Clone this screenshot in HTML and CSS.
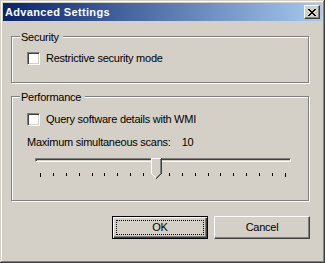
FILE: index.html
```html
<!DOCTYPE html>
<html>
<head>
<meta charset="utf-8">
<link rel="stylesheet" href="styles.css">
</head>
<body>
<div class="window">
  <div class="titlebar">
    <span class="title">Advanced Settings</span>
    <span class="close"><svg width="8" height="7" viewBox="0 0 8 7" shape-rendering="crispEdges"><path fill="#000" d="M0 0h2v1H0zM6 0h2v1H6zM1 1h2v1H1zM5 1h2v1H5zM2 2h4v1H2zM3 3h2v1H3zM2 4h4v1H2zM1 5h2v1H1zM5 5h2v1H5zM0 6h2v1H0zM6 6h2v1H6z"/></svg></span>
  </div>
  <div class="client">
    <div class="group g1">
      <div class="legend">Security</div>
      <div class="row r1"><span class="checkbox"></span><span>Restrictive security mode</span></div>
    </div>
    <div class="group g2">
      <div class="legend">Performance</div>
      <div class="row r2"><span class="checkbox"></span><span>Query software details with WMI</span></div>
      <div class="label-row">Maximum simultaneous scans:<span class="value">10</span></div>
      <div class="slider">
        <div class="track"></div>
        <div class="ticks"><i class="end"></i><i></i><i></i><i></i><i></i><i></i><i></i><i></i><i></i><i></i><i></i><i></i><i></i><i></i><i></i><i></i><i></i><i></i><i></i><i class="end"></i></div>
        <svg class="thumb" width="11" height="21" viewBox="0 0 11 21" shape-rendering="crispEdges">
          <path fill="#d4d0c8" d="M1 1h8v15H1zM2 16h6v1H2zM3 17h3v1H3zM4 18h2v1H4z"/>
          <path fill="#fff" d="M0 0h10v1H0zM0 1h1v15H0zM1 16h1v1H1zM2 17h1v1H2zM3 18h1v1H3zM4 19h1v1H4z"/>
          <path fill="#808080" d="M9 1h1v15H9zM8 16h1v1H8zM7 17h1v1H7zM6 18h1v1H6zM5 19h1v1H5z"/>
          <path fill="#404040" d="M10 0h1v16h-1zM9 16h1v1H9zM8 17h1v1H8zM7 18h1v1H7zM6 19h1v1H6zM5 20h1v1H5z"/>
        </svg>
      </div>
    </div>
    <div class="buttons">
      <button class="btn default">OK</button>
      <button class="btn">Cancel</button>
    </div>
  </div>
</div>
</body>
</html>
```

FILE: styles.css
```css
html, body {
  margin: 0;
  padding: 0;
  background: #d4d0c8;
}

.window {
  width: 325px;
  height: 263px;
  box-sizing: border-box;
  padding: 3px;
  background: #d4d0c8;
  box-shadow: inset -1px -1px 0 #404040, inset 1px 1px 0 #d4d0c8, inset -2px -2px 0 #808080, inset 2px 2px 0 #fff;
  font-family: "Liberation Sans", Arial, sans-serif;
  font-size: 11px;
  letter-spacing: -0.25px;
  color: #000;
}

.titlebar {
  height: 18px;
  display: flex;
  align-items: center;
  justify-content: space-between;
  padding: 0 2px;
  background: linear-gradient(to right, #0a246a, #a6caf0);
}

.title {
  color: #fff;
  font-weight: bold;
  font-size: 11px;
  letter-spacing: 0.35px;
  line-height: 18px;
}

.close {
  width: 16px;
  height: 14px;
  box-sizing: border-box;
  padding: 3px 0 0 3px;
  border: 1px solid;
  border-color: #fff #404040 #404040 #fff;
  box-shadow: inset -1px -1px 0 #808080;
  background: #d4d0c8;
}

.close svg {
  display: block;
}

.client {
  padding: 15px 13px 0 8px;
}

.group {
  border: 1px solid #808080;
  box-shadow: 1px 1px 0 #fff, inset 1px 1px 0 #fff;
  padding-left: 15px;
}

.g1 {
  padding-bottom: 17px;
}

.g2 {
  margin-top: 13px;
  padding-bottom: 23px;
}

.legend {
  width: fit-content;
  margin: -6px 0 0 -7px;
  padding: 0 4px 0 1px;
  line-height: 13px;
  background: #d4d0c8;
}

.row {
  display: flex;
  align-items: flex-start;
  gap: 6px;
  line-height: 13px;
}

.r1 {
  margin-top: 8px;
}

.r2 {
  margin-top: 9px;
}

.checkbox {
  width: 13px;
  height: 13px;
  box-sizing: border-box;
  border: 1px solid;
  border-color: #808080 #fff #fff #808080;
  box-shadow: inset 1px 1px 0 #404040, inset -1px -1px 0 #d4d0c8;
  background: #fff;
  flex: none;
}

.label-row {
  margin-top: 10px;
  line-height: 13px;
}

.value {
  margin-left: 11px;
}

.slider {
  position: relative;
  margin-top: 9px;
}

.track {
  margin: 8px 0 0 8px;
  width: 256px;
  height: 4px;
  box-sizing: border-box;
  border: 1px solid;
  border-color: #808080 #fff #fff #808080;
  box-shadow: inset 1px 1px 0 #404040, inset -1px -1px 0 #d4d0c8;
}

.ticks {
  margin: 11px 0 0 13px;
  width: 246px;
  height: 4px;
  display: flex;
  justify-content: space-between;
  align-items: flex-start;
}

.ticks i {
  display: block;
  width: 1px;
  height: 3px;
  background: #000;
}

.ticks i.end {
  height: 4px;
}

.thumb {
  position: absolute;
  left: 124px;
  top: 0;
  display: block;
}

.buttons {
  display: flex;
  justify-content: flex-end;
  gap: 6px;
  margin-top: 15px;
  margin-right: -1px;
}

.btn {
  position: relative;
  width: 96px;
  height: 23px;
  box-sizing: border-box;
  margin: 0;
  padding: 0;
  font: inherit;
  letter-spacing: inherit;
  line-height: 13px;
  color: #000;
  background: #d4d0c8;
  border: 1px solid;
  border-color: #fff #404040 #404040 #fff;
  box-shadow: inset -1px -1px 0 #808080;
  outline: none;
}

.btn.default {
  border: 1px solid #000;
  box-shadow: inset 1px 1px 0 #fff, inset -1px -1px 0 #404040, inset -2px -2px 0 #808080;
}

.btn.default::after {
  content: "";
  position: absolute;
  top: 3px;
  left: 3px;
  right: 3px;
  bottom: 3px;
  border: 1px dotted #000;
}
```
